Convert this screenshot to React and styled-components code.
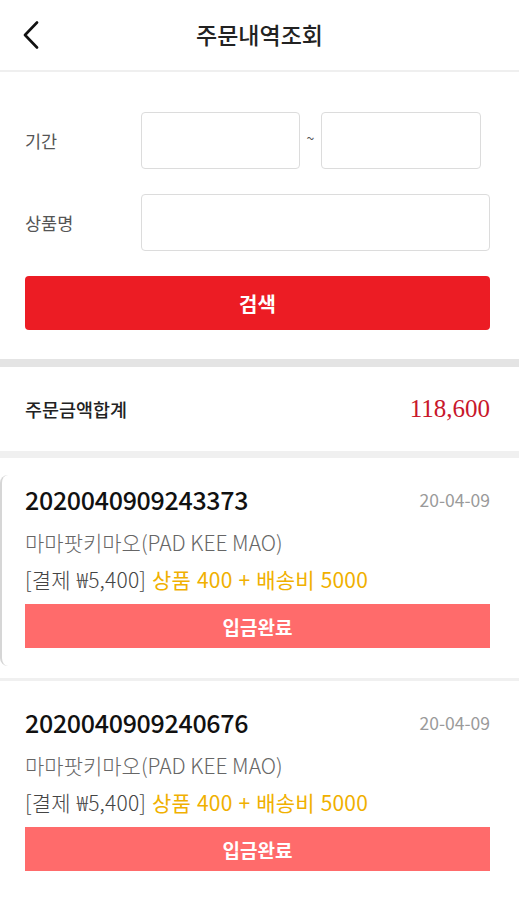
import React from "react";
import styled, { createGlobalStyle } from "styled-components";

const GlobalStyle = createGlobalStyle`
  body {
    margin: 0;
    background: #fff;
    font-family: "Noto Sans CJK KR", "Noto Sans", sans-serif;
  }
`;

const orders = [
  { no: "2020040909243373", date: "20-04-09", name: "마마팟키마오(PAD KEE MAO)", paid: "₩5,400", goods: 400, ship: 5000, swiped: true },
  { no: "2020040909240676", date: "20-04-09", name: "마마팟키마오(PAD KEE MAO)", paid: "₩5,400", goods: 400, ship: 5000 },
];

const App = () => {
  return (
    <Page>
      <GlobalStyle />
      <Header>
        <BackButton aria-label="back">
          <svg width="18" height="28" viewBox="0 0 18 28" fill="none">
            <path d="M15 1.5L3 14l12 12.5" stroke="#111" strokeWidth="2.6" strokeLinecap="round" strokeLinejoin="round" />
          </svg>
        </BackButton>
        <HeaderTitle>주문내역조회</HeaderTitle>
      </Header>

      <SearchForm>
        <FormRow>
          <Label>기간</Label>
          <DateRange>
            <Field $width="159px" />
            <Tilde>~</Tilde>
            <Field $width="160px" />
          </DateRange>
        </FormRow>
        <FormRow>
          <Label>상품명</Label>
          <Field $width="349px" />
        </FormRow>
        <SearchButton>검색</SearchButton>
      </SearchForm>

      <ThickDivider />

      <Summary>
        <SummaryLabel>주문금액합계</SummaryLabel>
        <SummaryValue>118,600</SummaryValue>
      </Summary>

      <ThinDivider $h="7px" />

      {orders.map((o) => (
        <React.Fragment key={o.no}>
          <OrderCard $swiped={o.swiped}>
            <OrderTop>
              <OrderNo>{o.no}</OrderNo>
              <OrderDate>{o.date}</OrderDate>
            </OrderTop>
            <ProductName>{o.name}</ProductName>
            <PriceLine>
              [결제 {o.paid}] <Detail>상품 {o.goods} + 배송비 {o.ship}</Detail>
            </PriceLine>
            <Status>입금완료</Status>
          </OrderCard>
          <ThinDivider $h="3px" />
        </React.Fragment>
      ))}
    </Page>
  );
};

export default App;

const Page = styled.div`
  width: 519px;
  min-height: 900px;
  overflow: hidden;
`;

const Header = styled.div`
  height: 70px;
  border-bottom: 2px solid #efefef;
  display: flex;
  align-items: center;
  justify-content: center;
  position: relative;
`;

const BackButton = styled.button`
  position: absolute;
  left: 22px;
  top: 21px;
  border: none;
  background: none;
  padding: 0;
  display: flex;
`;

const HeaderTitle = styled.div`
  font-size: 23px;
  font-weight: 500;
  color: #222;
  margin-top: -3px;
`;

const SearchForm = styled.div`
  padding: 40px 29px 29px 25px;
  display: flex;
  flex-direction: column;
  gap: 25px;
`;

const FormRow = styled.div`
  display: flex;
  align-items: center;
`;

const Label = styled.div`
  width: 116px;
  font-size: 17.5px;
  color: #555;
`;

const DateRange = styled.div`
  display: flex;
  align-items: center;
`;

const Field = styled.div`
  width: ${(p) => p.$width};
  height: 57px;
  box-sizing: border-box;
  border: 1px solid #dcdcdc;
  border-radius: 4px;
  background: #fff;
`;

const Tilde = styled.span`
  width: 21px;
  text-align: center;
  font-size: 14px;
  color: #555;
  margin-top: -6px;
`;

const SearchButton = styled.div`
  height: 54px;
  border-radius: 4px;
  background: #ec1c24;
  color: #fff;
  font-size: 20px;
  font-weight: 700;
  display: flex;
  align-items: center;
  justify-content: center;
`;

const ThickDivider = styled.div`
  height: 8px;
  background: #e4e4e4;
`;

const ThinDivider = styled.div`
  height: ${(p) => p.$h};
  background: #f0f0f0;
`;

const Summary = styled.div`
  height: 84px;
  padding: 0 29px 0 25px;
  display: flex;
  align-items: center;
  justify-content: space-between;
`;

const SummaryLabel = styled.div`
  font-size: 18.5px;
  font-weight: 500;
  color: #222;
`;

const SummaryValue = styled.div`
  font-family: "Liberation Serif", "DejaVu Serif", serif;
  font-size: 25px;
  color: #c8172b;
`;

const OrderCard = styled.div`
  position: relative;
  padding: 25px 29px 30px 25px;
  display: flex;
  flex-direction: column;
  ${(p) =>
    p.$swiped &&
    `
    &::before {
      content: "";
      position: absolute;
      left: 0;
      top: 17px;
      bottom: 12px;
      width: 10px;
      border-left: 2px solid #d6d6d6;
      border-radius: 8px 0 0 8px;
    }
  `}
`;

const OrderTop = styled.div`
  display: flex;
  align-items: center;
  justify-content: space-between;
  height: 32px;
`;

const OrderNo = styled.div`
  font-size: 25px;
  font-weight: 500;
  color: #111;
  letter-spacing: -0.3px;
`;

const OrderDate = styled.div`
  font-size: 17.5px;
  color: #9a9a9a;
`;

const ProductName = styled.div`
  margin-top: 14px;
  line-height: 26px;
  font-size: 21px;
  font-weight: 300;
  color: #666;
`;

const PriceLine = styled.div`
  margin-top: 11px;
  line-height: 26px;
  font-size: 21px;
  font-weight: 300;
  color: #444;
  letter-spacing: 0.2px;
  word-spacing: 1px;
`;

const Detail = styled.span`
  color: #f0b000;
  font-weight: 400;
`;

const Status = styled.div`
  margin-top: 12px;
  height: 44px;
  background: #ff6b6b;
  color: #fff;
  font-size: 19px;
  font-weight: 700;
  display: flex;
  align-items: center;
  justify-content: center;
`;
